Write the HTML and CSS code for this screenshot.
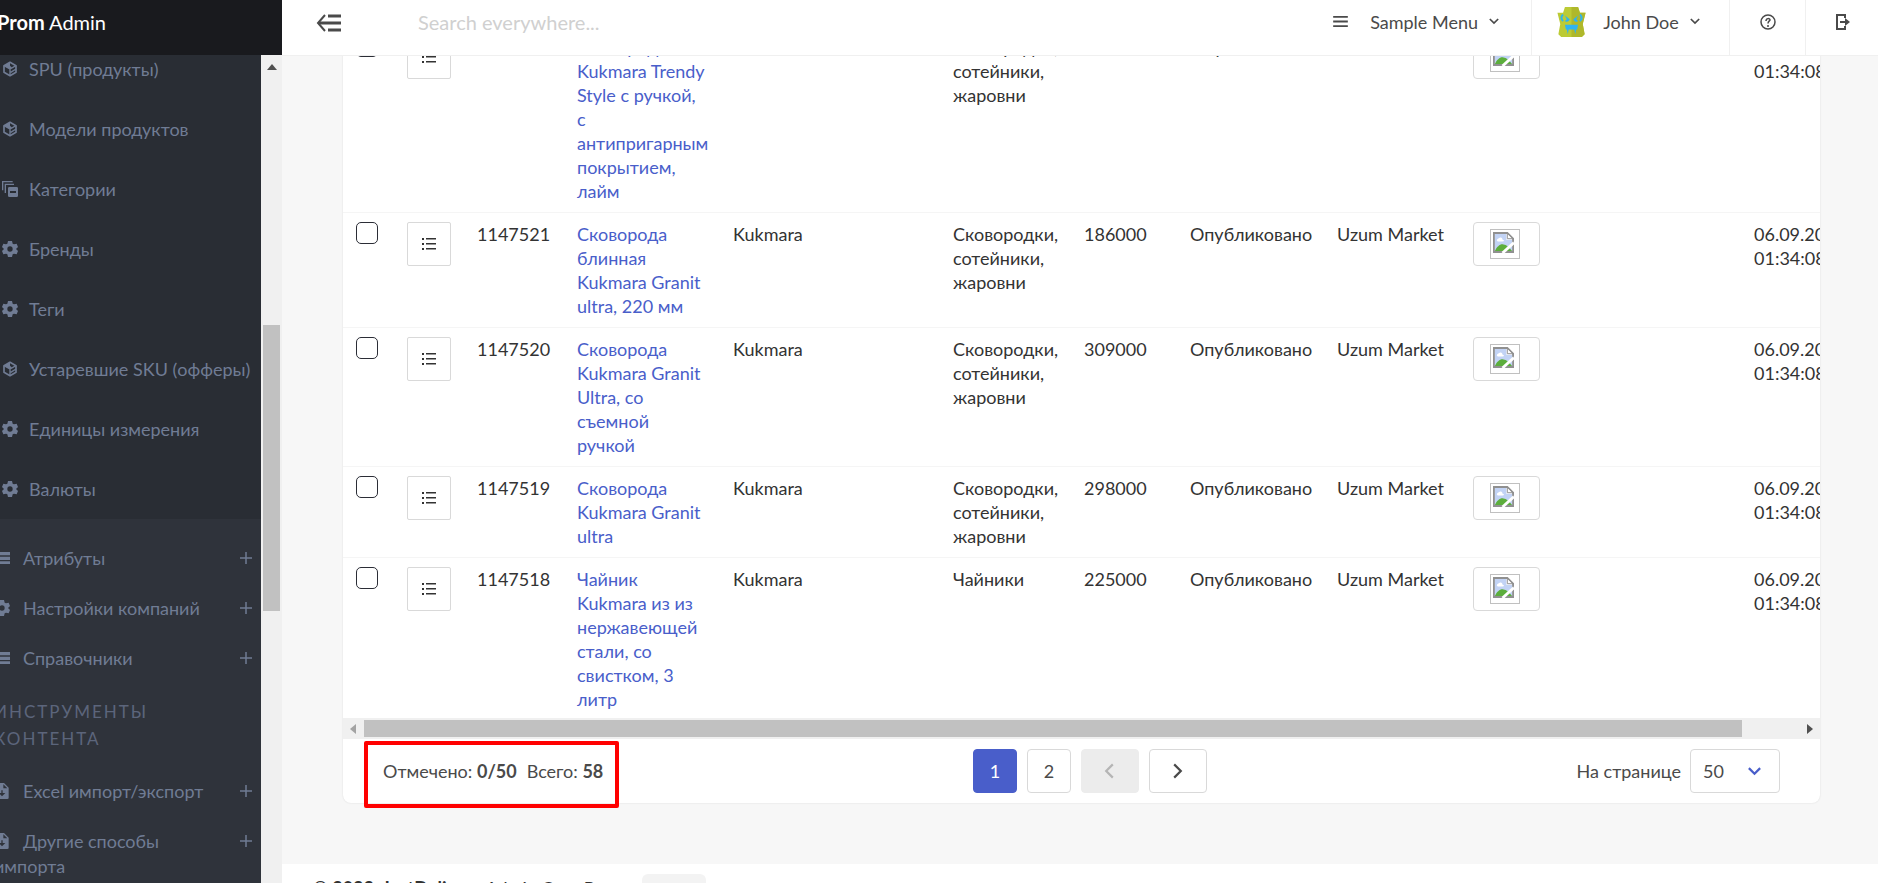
FILE: index.html
```html
<!DOCTYPE html>
<html lang="ru">
<head>
<meta charset="UTF-8" />
<meta name="viewport" content="width=device-width, initial-scale=1" />
<title>Prom Admin</title>
<link rel="stylesheet" href="styles.css">
</head>
<body>

<svg class="sprite" aria-hidden="true">
  <symbol id="i-box" viewBox="0 0 24 24"><path fill="none" stroke="currentColor" stroke-width="2.500" stroke-linejoin="round" d="M12 2 21 7v10l-9 5-9-5V7z"/><path fill="none" stroke="currentColor" stroke-width="2" d="M3 7l9 5 9-5M12 12v10M13 17l8-5"/><path fill="currentColor" d="M3 7l9-5v5l3 3-3 2z"/></symbol>
  <symbol id="i-gear" viewBox="0 0 24 24"><path fill="currentColor" fill-rule="evenodd" d="M9 0h6l1 4 2 1 4-1 2 5-3 3 3 3-2 5-4-1-2 1-1 4H9l-1-4-2-1-4 1-2-5 3-3-3-3 2-5 4 1 2-1zM12 8a4 4 0 1 0 0 8 4 4 0 0 0 0-8z"/></symbol>
  <symbol id="i-copy" viewBox="0 0 24 24"><path fill="none" stroke="currentColor" stroke-width="2" d="M1 14V1h15M5 18V5h13"/><path fill="currentColor" fill-rule="evenodd" d="M11 9h11a2 2 0 0 1 2 2v11a2 2 0 0 1-2 2H11a2 2 0 0 1-2-2V11a2 2 0 0 1 2-2zm1 6v3h9v-3z"/></symbol>
  <symbol id="i-rows" viewBox="0 0 24 24"><path fill="currentColor" d="M0 3h4v5H0zM6 3h18v5H6zM0 10h4v5H0zM6 10h18v5H6zM0 17h4v4H0zM6 17h18v4H6z"/></symbol>
  <symbol id="i-file" viewBox="0 0 24 24"><path fill="currentColor" fill-rule="evenodd" d="M4 0h11l7 7v15a2 2 0 0 1-2 2H4a2 2 0 0 1-2-2V2a2 2 0 0 1 2-2zm10 2v6h6zM11 11v4H7l5 5 5-5h-4v-4z"/></symbol>
  <symbol id="i-plus" viewBox="0 0 12 12"><path fill="none" stroke="currentColor" stroke-width="1.500" d="M6 0v12M0 6h12"/></symbol>
  <symbol id="i-list" viewBox="0 0 16 14"><path fill="currentColor" d="M1 1h2v2H1zM1 6h2v2H1zM1 11h2v2H1zM5 1h10v1.500H5zM5 6h10v1.500H5zM5 11h10v1.500H5z"/></symbol>
  <symbol id="i-down" viewBox="0 0 12 8"><path fill="none" stroke="currentColor" stroke-width="2" d="M1 1l5 5 5-5"/></symbol>
  <symbol id="i-broken" viewBox="0 0 22 22">
    <path fill="#fff" stroke="#909090" stroke-width="2" d="M1 1h14l6 6v14H1z"/>
    <path fill="#c2d3f5" d="M2 2h12v6h6v12H2z"/>
    <path fill="#fff" d="M4 9c0-2 2-2 3-3 2-1 3 1 3 2 2 0 2 2 0 2H5zM15 2v5h5z"/>
    <path fill="none" stroke="#909090" stroke-width="1" d="M15 1v6h6"/>
    <path fill="#5cae3c" d="M2 20c2-5 6-8 9-7 3 0 6 3 9 7z"/>
    <path fill="none" stroke="#fff" stroke-width="3" d="M10 22 22 11"/>
  </symbol>
</svg>

<aside class="sidebar">
  <a href="#" class="brand"><b>Prom</b> Admin</a>
  <div class="sidebar-body">
    <nav class="menu">
      <div class="submenu">
        <a href="#"><svg class="icon"><use href="#i-box"/></svg>SPU (продукты)</a>
        <a href="#"><svg class="icon"><use href="#i-box"/></svg>Модели продуктов</a>
        <a href="#"><svg class="icon"><use href="#i-copy"/></svg>Категории</a>
        <a href="#"><svg class="icon"><use href="#i-gear"/></svg>Бренды</a>
        <a href="#"><svg class="icon"><use href="#i-gear"/></svg>Теги</a>
        <a href="#"><svg class="icon"><use href="#i-box"/></svg>Устаревшие SKU (офферы)</a>
        <a href="#"><svg class="icon"><use href="#i-gear"/></svg>Единицы измерения</a>
        <a href="#"><svg class="icon"><use href="#i-gear"/></svg>Валюты</a>
      </div>
      <div class="group">
        <a href="#"><span><svg class="icon"><use href="#i-rows"/></svg>Атрибуты</span><svg class="plus"><use href="#i-plus"/></svg></a>
        <a href="#"><span><svg class="icon"><use href="#i-gear"/></svg>Настройки компаний</span><svg class="plus"><use href="#i-plus"/></svg></a>
        <a href="#"><span><svg class="icon"><use href="#i-rows"/></svg>Справочники</span><svg class="plus"><use href="#i-plus"/></svg></a>
        <h2>Инструменты контента</h2>
        <a href="#"><span><svg class="icon"><use href="#i-file"/></svg>Excel импорт/экспорт</span><svg class="plus"><use href="#i-plus"/></svg></a>
        <a href="#"><span><svg class="icon"><use href="#i-file"/></svg>Другие способы импорта</span><svg class="plus"><use href="#i-plus"/></svg></a>
      </div>
    </nav>
    <div class="vscroll">
      <svg class="arrow-up" viewBox="0 0 10 6"><path d="M0 6 5 0l5 6z"/></svg>
      <div class="vthumb"></div>
    </div>
  </div>
</aside>

<div class="page">

  <header class="topbar">
    <button class="toggle" aria-label="Свернуть меню">
      <svg viewBox="0 0 26 18"><path fill="none" stroke="currentColor" stroke-width="3" d="M12 2h13M3 9h22M12 16h13"/><path fill="none" stroke="currentColor" stroke-width="2" d="M9 1 2 9l7 8"/></svg>
    </button>
    <input class="search" type="text" placeholder="Search everywhere..." aria-label="Search everywhere">
    <button class="top-item sample">
      <svg class="burger" viewBox="0 0 16 12"><path stroke="currentColor" stroke-width="2" d="M0 1h16M0 6h16M0 11h16"/></svg>
      Sample Menu
      <svg class="caret"><use href="#i-down"/></svg>
    </button>
    <button class="top-item user">
      <svg class="avatar" viewBox="0 0 30 32">
        <path fill="#bccb35" d="M8 0h14l2 6h6l-3 12 2 11-3 3H4l-3-3 2-11L0 6h6z"/>
        <path fill="#afb82b" d="M15 0h7l2 6h6l-3 12 2 11-3 3H15z"/>
        <path fill="none" stroke="#2fb4f0" stroke-width="2" d="M6 8c-3 3-2 5 0 7M24 8c3 3 2 5 0 7"/>
        <path fill="#2fb4f0" d="M8 9l5 4c0 2-4 4-5 2l2-2zM22 9l-5 4c0 2 4 4 5 2l-2-2z"/>
        <path fill="#2fb4f0" d="M8 19h14l-1 5h-1l-1 5-1-5h-6l-1 5-1-5H9z"/>
      </svg>
      John Doe
      <svg class="caret"><use href="#i-down"/></svg>
    </button>
    <button class="top-item help" aria-label="Помощь">
      <svg viewBox="0 0 16 16"><circle cx="8" cy="8" r="7" fill="none" stroke="currentColor" stroke-width="1.500"/><path fill="none" stroke="currentColor" stroke-width="1.500" d="M6 7c0-3 4-3 4-1 0 1-2 1-2 3.500M8 11v2"/></svg>
    </button>
    <button class="top-item exit" aria-label="Выход">
      <svg viewBox="0 0 16 16"><path fill="none" stroke="currentColor" stroke-width="2" d="M11 4V1H3v14h8v-3"/><path fill="currentColor" d="M6 7h5V4l5 4-5 4V9H6z"/></svg>
    </button>
  </header>

  <main>
    <div class="card">
      <div class="table-wrap">
        <table>
          <colgroup>
            <col class="c-check"><col class="c-act"><col class="c-id"><col class="c-name"><col class="c-brand"><col class="c-cat"><col class="c-price"><col class="c-status"><col class="c-market"><col class="c-img"><col class="c-date">
          </colgroup>
          <tbody id="product-rows">
            <!-- строки товаров -->
          </tbody>
        </table>
      </div>
      <div class="hscroll">
        <svg class="arrow-left" viewBox="0 0 6 10"><path d="M6 0 0 5l6 5z"/></svg>
        <div class="htrack"><div class="hthumb"></div></div>
        <svg class="arrow-right" viewBox="0 0 6 10"><path d="M0 0l6 5-6 5z"/></svg>
      </div>
      <div class="card-footer">
        <div class="summary">
          <span>Отмечено: <b>0/50</b></span>
          <span>Всего: <b>58</b></span>
        </div>
        <div class="pager">
          <button class="active">1</button>
          <button>2</button>
          <button class="nav" disabled aria-label="Назад"><svg viewBox="0 0 10 14"><path d="M8 1 2 7l6 6"/></svg></button>
          <button class="nav" aria-label="Вперёд"><svg viewBox="0 0 10 14"><path d="M2 1l6 6-6 6"/></svg></button>
        </div>
        <div class="per-page">
          <label for="per-page">На странице</label>
          <div class="select">
            <select id="per-page"><option>50</option></select>
            <svg><use href="#i-down"/></svg>
          </div>
        </div>
      </div>
    </div>
  </main>

  <footer class="footer">
    <span class="copy"><b>© 2023, JustDelivery</b> Admin Core Prom</span>
    <span class="badge"></span>
  </footer>

</div>

<script>
  const pans = "Сковородки, сотейники, жаровни";
  const products = [
    { id: 1147522, name: "Сковорода<br>Kukmara Trendy<br>Style с ручкой,<br>с<br>антипригарным<br>покрытием,<br>лайм", cat: pans, price: 186000 },
    { id: 1147521, name: "Сковорода<br>блинная<br>Kukmara Granit<br>ultra, 220 мм", cat: pans, price: 186000 },
    { id: 1147520, name: "Сковорода<br>Kukmara Granit<br>Ultra, со<br>съемной<br>ручкой", cat: pans, price: 309000 },
    { id: 1147519, name: "Сковорода<br>Kukmara Granit<br>ultra", cat: pans, price: 298000 },
    { id: 1147518, name: "Чайник<br>Kukmara из из<br>нержавеющей<br>стали, со<br>свистком, 3<br>литр", cat: "Чайники", price: 225000 }
  ];

  document.getElementById("product-rows").innerHTML = products.map(p => `
    <tr>
      <td><input type="checkbox" aria-label="Выбрать ${p.id}"></td>
      <td><button class="row-btn" aria-label="Действия"><svg><use href="#i-list"/></svg></button></td>
      <td>${p.id}</td>
      <td><a href="#">${p.name}</a></td>
      <td>Kukmara</td>
      <td>${p.cat}</td>
      <td>${p.price}</td>
      <td>Опубликовано</td>
      <td>Uzum Market</td>
      <td><div class="thumb"><span><svg><use href="#i-broken"/></svg></span></div></td>
      <td>06.09.2023 01:34:08</td>
    </tr>
  `).join("");
</script>

</body>
</html>
```
FILE: styles.css
```css
* {
  box-sizing: border-box;
}
body {
  margin: 0;
  display: flex;
  height: 100vh;
  overflow: hidden;
  background: #f7f7f7;
  color: #333;
  font-family: Lato, "Open Sans", sans-serif;
  font-size: 18px;
  line-height: 24px;
}
a {
  color: #495eca;
  text-decoration: none;
}
button, input, select {
  font: inherit;
  color: inherit;
}
button {
  padding: 0;
  border: none;
  background: none;
  cursor: pointer;
}
svg {
  display: block;
  flex: none;
}
.sprite {
  position: absolute;
  width: 0;
  height: 0;
}

/* Sidebar */
.sidebar {
  width: 282px;
  flex: none;
  display: flex;
  flex-direction: column;
  overflow: hidden;
  background: #2f333b;
}
.brand {
  height: 55px;
  flex: none;
  padding-top: 10px;
  margin-left: -3px;
  background: #191a1e;
  color: #fff;
  font-size: 20px;
}
.sidebar-body {
  flex: 1;
  min-height: 0;
  display: flex;
}
.menu {
  flex: 1;
  overflow: hidden;
  display: flex;
  flex-direction: column;
}
.menu a {
  color: #707c94;
}
.icon {
  width: 16px;
  height: 16px;
}
.submenu {
  flex: none;
  margin-top: -16px;
  background: #292d34;
}
.submenu a {
  display: flex;
  align-items: center;
  gap: 11px;
  height: 60px;
  padding-left: 2px;
  white-space: nowrap;
}
.group {
  padding: 15px 9px 0 0;
  margin-left: -6px;
}
.group a {
  display: flex;
  justify-content: space-between;
  padding: 12px 0 13px;
  line-height: 25px;
}
.group .icon {
  display: inline-block;
  vertical-align: -1px;
  margin-right: 13px;
}
.group span {
  max-width: 220px;
}
.plus {
  width: 12px;
  height: 12px;
  margin-top: 6px;
}
.group h2 {
  margin: 14px 40px 15px 0;
  color: #5c657b;
  font-size: 17px;
  font-weight: normal;
  line-height: 27px;
  letter-spacing: 2px;
  text-transform: uppercase;
}
.vscroll {
  width: 21px;
  padding: 9px 2px 0;
  background: #f0f0f0;
}
.arrow-up {
  width: 10px;
  height: 6px;
  margin: 0 auto;
  fill: #505050;
}
.vthumb {
  height: 286px;
  margin-top: 255px;
  background: #c1c1c1;
}

/* Top bar */
.page {
  flex: 1;
  min-width: 0;
  display: flex;
  flex-direction: column;
}
.topbar {
  position: fixed;
  top: 0;
  left: 282px;
  right: 0;
  z-index: 10;
  display: flex;
  height: 56px;
  background: #fff;
  border-bottom: 1px solid #f0f0f0;
  color: #4a4a4a;
}
.toggle {
  padding: 0 0 10px 34px;
}
.toggle svg {
  width: 26px;
  height: 18px;
}
.search {
  flex: 1;
  min-width: 0;
  margin-left: 76px;
  padding: 0 0 11px;
  border: none;
  outline: none;
  background: none;
  font-size: 20px;
}
.search::placeholder {
  color: #d0d0d0;
}
.top-item {
  display: flex;
  align-items: center;
  justify-content: center;
  padding-bottom: 12px;
}
.top-item + .top-item {
  border-left: 1px solid #f0f0f0;
}
.caret {
  width: 10px;
  height: 7px;
  margin-left: 11px;
}
.sample {
  padding-right: 32px;
}
.burger {
  width: 15px;
  height: 11px;
  margin-right: 22px;
}
.user {
  width: 198px;
  padding-right: 4px;
}
.avatar {
  width: 29px;
  height: 30px;
  margin-right: 17px;
}
.help {
  width: 76px;
}
.exit {
  width: 73px;
}
.help svg, .exit svg {
  width: 16px;
  height: 16px;
}

/* Table */
main {
  flex: none;
  padding: 26px 58px 61px 61px;
}
.card {
  background: #fff;
  border-radius: 0 0 8px 8px;
  box-shadow: 0 0 2px rgb(0 0 0 / 0.12);
}
.table-wrap {
  overflow: hidden;
}
table {
  width: 100%;
  min-width: 1540px;
  table-layout: fixed;
  border-collapse: separate;
  border-spacing: 0;
}
td {
  padding: 9px 13px;
  border-bottom: 1px solid #f5f5f5;
  vertical-align: top;
}
tr:last-child td {
  padding-bottom: 7px;
  border-bottom: none;
}
.c-check { width: 51px; }
.c-act { width: 70px; }
.c-id { width: 100px; }
.c-name { width: 156px; }
.c-brand { width: 220px; }
.c-cat { width: 131px; }
.c-price { width: 106px; }
.c-status { width: 147px; }
.c-market { width: 136px; }
.c-img { width: 281px; }
td input {
  display: block;
  appearance: none;
  width: 22px;
  height: 22px;
  margin: 0;
  border: 1px solid #2b2d36;
  border-radius: 5px;
}
.row-btn {
  display: flex;
  align-items: center;
  justify-content: center;
  width: 44px;
  height: 44px;
  border: 1px solid #d9d9d9;
  border-radius: 2px;
}
.row-btn svg {
  width: 16px;
  height: 14px;
}
.thumb {
  display: flex;
  align-items: center;
  justify-content: center;
  width: 67px;
  height: 44px;
  padding-right: 3px;
  border: 1px solid #d9d9d9;
  border-radius: 4px;
}
.thumb span {
  width: 30px;
  height: 30px;
  padding: 2px;
  border: 1px solid #c0c0c0;
}
.thumb svg {
  width: 21px;
  height: 21px;
}
.hscroll {
  display: flex;
  align-items: center;
  height: 21px;
  padding: 0 7px;
  background: #f0f0f0;
}
.hscroll > svg {
  width: 6px;
  height: 10px;
}
.arrow-left {
  fill: #a3a3a3;
}
.arrow-right {
  fill: #505050;
}
.htrack {
  flex: 1;
  margin: 0 8px;
}
.hthumb {
  width: 96%;
  height: 17px;
  background: #c1c1c1;
}

/* Card footer */
.card-footer {
  display: flex;
  justify-content: space-between;
  padding: 10px 40px;
  color: #4a4a4a;
}
.summary {
  position: relative;
  display: flex;
  align-items: center;
  gap: 10px;
}
.summary::after {
  content: "";
  position: absolute;
  inset: -8px -16px -15px -19px;
  border: 4px solid #f00;
  border-radius: 2px;
}
.pager {
  display: flex;
  gap: 10px;
}
.pager button {
  display: flex;
  align-items: center;
  justify-content: center;
  width: 44px;
  height: 44px;
  border: 1px solid #d9d9d9;
  border-radius: 4px;
}
.pager .active {
  background: #495eca;
  border-color: #495eca;
  color: #fff;
}
.pager .nav {
  width: 58px;
}
.pager .nav:disabled {
  background: #ececec;
  border-color: #ececec;
  color: #b5b5b5;
}
.pager svg {
  width: 11px;
  height: 16px;
  fill: none;
  stroke: currentColor;
  stroke-width: 2;
}
.per-page {
  display: flex;
  align-items: center;
  gap: 9px;
}
.select {
  position: relative;
}
.select select {
  appearance: none;
  width: 90px;
  height: 44px;
  padding: 0 12px;
  border: 1px solid #d9d9d9;
  border-radius: 4px;
  background: #fff;
}
.select svg {
  position: absolute;
  right: 18px;
  top: 18px;
  width: 15px;
  height: 9px;
  color: #495eca;
  pointer-events: none;
}

.footer {
  flex: none;
  display: flex;
  align-items: flex-start;
  gap: 16px;
  height: 60px;
  padding: 10px 31px;
  background: #fff;
}
.copy {
  padding-top: 2px;
}
.badge {
  width: 64px;
  height: 32px;
  border-radius: 6px;
  background: #f3f3f3;
}
```
